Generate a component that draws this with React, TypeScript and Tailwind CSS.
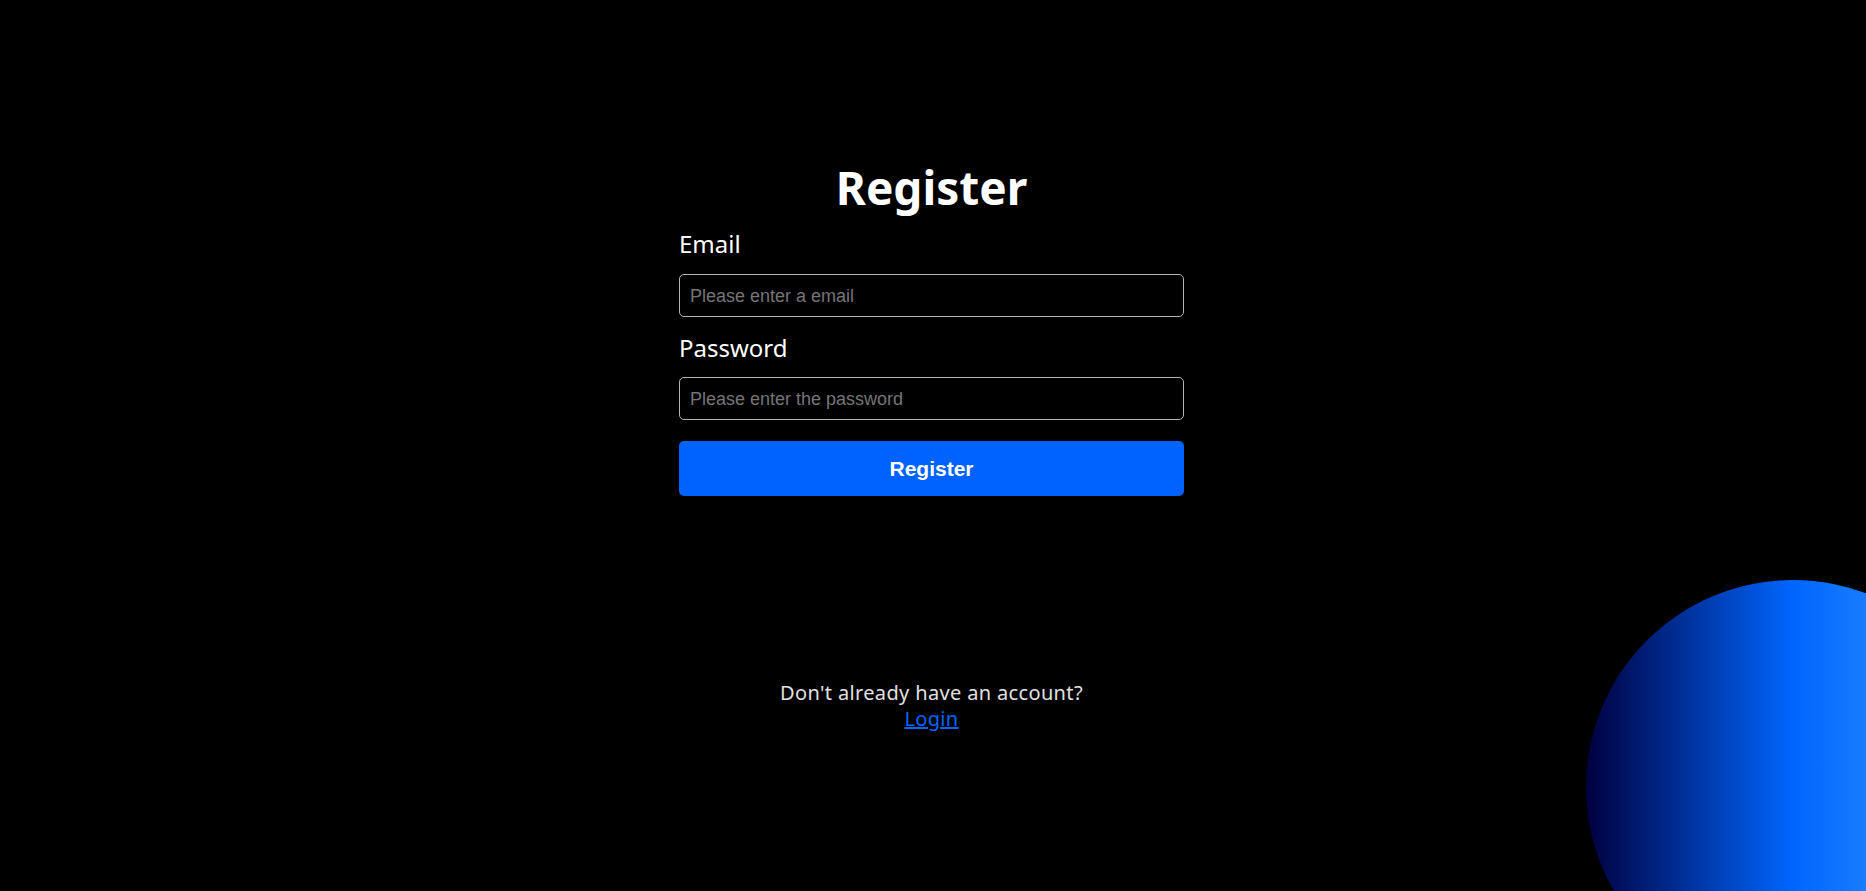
import React from "react";

export default function App() {
  return (
    <div
      className="relative h-screen w-full overflow-hidden bg-black"
      style={{ fontFamily: '"Noto Sans", "Open Sans", sans-serif' }}
    >
      <div className="flex flex-col items-center pt-[159px]">
        <h1 className="mr-[3px] text-[46px] font-bold leading-[56px] text-white">Register</h1>
        <form className="mr-[3px] flex w-[505px] flex-col" onSubmit={(e) => e.preventDefault()}>
          <label className="mt-[13px] text-[24px] leading-[32px] text-white">Email</label>
          <input
            type="email"
            placeholder="Please enter a email"
            className="mt-[14px] h-[43px] w-full rounded-[5px] border border-[#b4b4b4] bg-black px-[10px] pt-[1px] text-[18px] text-white outline-none placeholder:text-[#757575]"
            style={{ fontFamily: '"Liberation Sans", Arial, sans-serif' }}
          />
          <label className="mt-[15px] text-[24px] leading-[32px] text-white">Password</label>
          <input
            type="password"
            placeholder="Please enter the password"
            className="mt-[13px] h-[43px] w-full rounded-[5px] border border-[#b4b4b4] bg-black px-[10px] pt-[1px] text-[18px] text-white outline-none placeholder:text-[#757575]"
            style={{ fontFamily: '"Liberation Sans", Arial, sans-serif' }}
          />
          <button
            type="submit"
            className="mt-[21px] h-[55px] w-full rounded-[5px] bg-[#0062ff] text-[21px] font-bold text-white"
            style={{ fontFamily: '"Liberation Sans", Arial, sans-serif' }}
          >
            Register
          </button>
        </form>
        <div className="mr-[3px] mt-[184px] flex flex-col items-center text-[20px] leading-[26px] tracking-[0.35px] text-[#e0e0e0]">
          <span>Don't already have an account?</span>
          <a href="#" className="text-[#0066ff] underline">Login</a>
        </div>
      </div>
      <div className="absolute left-[1586px] top-[580px] h-[414px] w-[414px] rounded-full bg-[linear-gradient(to_right,#00003f_0%,#0066ff_50%,#45a4ff_100%)]" />
    </div>
  );
}
